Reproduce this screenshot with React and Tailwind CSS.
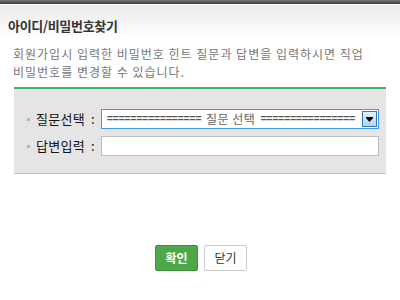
export default function App() {
  const font = { fontFamily: '"Noto Sans CJK KR", "Noto Sans", sans-serif' };
  const eq = "================";
  return (
    <div className="w-[400px] h-[300px] bg-white overflow-hidden" style={font}>
      <div className="h-[4px] bg-gradient-to-b from-[#7a7a7a] to-[#3c3c3c]" />
      <div className="h-px bg-white" />
      <div className="h-[35px] bg-gradient-to-b from-[#ebebeb] to-white pl-[8px] pt-[12px]">
        <div className="text-[13px] leading-[18px] font-bold text-[#333] tracking-[-0.3px]">아이디/비밀번호찾기</div>
      </div>
      <div className="mt-[5px] pl-[13px] text-[12px] leading-[18px] text-[#777] tracking-[1px] whitespace-nowrap">
        회원가입시 입력한 비밀번호 힌트 질문과 답변을 입력하시면 직업
        <br />
        비밀번호를 변경할 수 있습니다.
      </div>
      <div className="mt-[6px] ml-[14px] w-[372px] bg-[#e5e5e5] border-t-2 border-t-[#3db374] border-b border-b-[#bdbdbd] pt-[20px] pb-[17px] flex flex-col gap-[7px]">
        <div className="flex items-center h-[20px]">
          <div className="ml-[13px] w-[3px] h-[3px] bg-[#9fb8e0]" />
          <div className="ml-[6px] w-[55px] text-[13px] text-[#111] leading-[20px] tracking-[0.3px]">질문선택</div>
          <div className="text-[13px] text-[#111] leading-[20px]">:</div>
          <div className="ml-[6px] w-[278px] h-[20px] border border-[#3d9bf5] bg-white flex items-center justify-between pl-[5px] pr-px">
            <div className="flex items-center whitespace-nowrap text-[#555] leading-[18px]">
              <span className="text-[10.5px] font-bold tracking-[-0.4px] font-['Liberation_Mono',monospace]">{eq}</span>
              <span className="ml-[5px] text-[12px] tracking-[0.5px] text-[#666]">질문 선택</span>
              <span className="ml-[5px] text-[10.5px] font-bold tracking-[-0.4px] font-['Liberation_Mono',monospace]">{eq}</span>
            </div>
            <div className="w-[15px] h-[16px] border border-[#3b76ab] bg-gradient-to-b from-[#e4f3fc] to-[#a9d6f1] flex items-center justify-center shrink-0">
              <svg width="7" height="5" viewBox="0 0 7 5"><path d="M0 0h7v1l-3 3.5h-1L0 1z" fill="#000" /></svg>
            </div>
          </div>
        </div>
        <div className="flex items-center h-[20px]">
          <div className="ml-[13px] w-[3px] h-[3px] bg-[#9fb8e0]" />
          <div className="ml-[6px] w-[55px] text-[13px] text-[#111] leading-[20px] tracking-[0.3px]">답변입력</div>
          <div className="text-[13px] text-[#111] leading-[20px]">:</div>
          <div className="ml-[6px] w-[278px] h-[20px] border border-[#bdbdbd] bg-white" />
        </div>
      </div>
      <div className="mt-[71px] flex justify-center gap-[6px] pl-[2px]">
        <div className="w-[43px] h-[26px] bg-[#4ea84a] border border-[#3e9139] rounded-[2px] flex items-center justify-center text-white text-[12px] font-bold">확인</div>
        <div className="w-[43px] h-[26px] bg-white border border-[#cccccc] rounded-[2px] flex items-center justify-center text-[#333] text-[12px]">닫기</div>
      </div>
    </div>
  );
}
